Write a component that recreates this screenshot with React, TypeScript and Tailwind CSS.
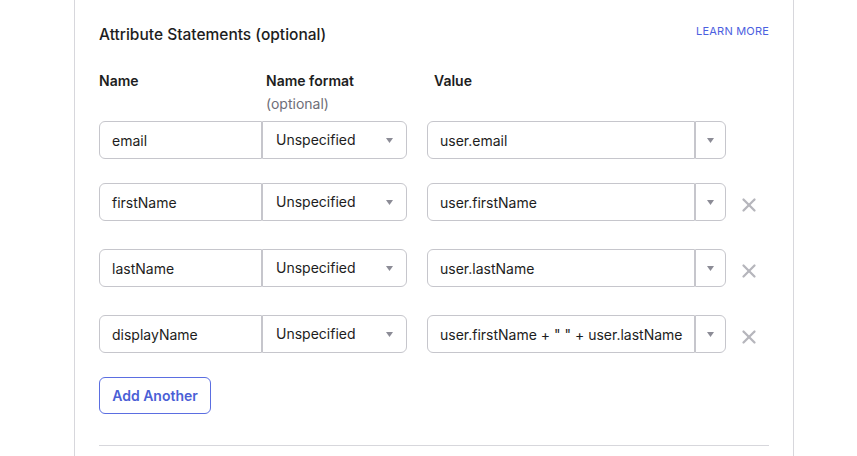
import { X } from 'lucide-react';

type Row = { name: string; value: string; removable: boolean };

const rows: Row[] = [
  { name: 'email', value: 'user.email', removable: false },
  { name: 'firstName', value: 'user.firstName', removable: true },
  { name: 'lastName', value: 'user.lastName', removable: true },
  { name: 'displayName', value: 'user.firstName + " " + user.lastName', removable: true },
];

const Caret = () => (
  <svg width="7" height="5" viewBox="0 0 7 5" className="fill-[#8c8c96]">
    <path d="M0 0 H7 L3.5 5 Z" />
  </svg>
);

const StatementRow = ({ row, first }: { row: Row; first: boolean }) => (
  <div className={`flex items-center h-[38px] ${first ? 'mb-6' : 'mb-7'}`}>
    <div className="flex h-full">
      <div className="w-[163px] h-full flex items-center pl-3 pt-px border border-[#c6c6cc] rounded-l-md text-sm text-[#1d1d21]">
        {row.name}
      </div>
      <div className="w-[145px] h-full flex items-center justify-between pl-[13px] pr-[13px] border border-[#c6c6cc] rounded-r-md text-sm text-[#1d1d21]">
        <span>Unspecified</span>
        <Caret />
      </div>
    </div>
    <div className="ml-5 flex h-full">
      <div className="w-[268px] h-full flex items-center pl-3 pt-px border border-[#c6c6cc] rounded-l-md text-sm text-[#1d1d21] whitespace-nowrap">
        {row.value}
      </div>
      <div className="w-[31px] h-full flex items-center justify-center border border-[#c6c6cc] rounded-r-md">
        <Caret />
      </div>
    </div>
    {row.removable && (
      <button className="ml-[12px] mt-[5px] w-[22px] h-[22px] flex items-center justify-center text-[#b6b6bc]" aria-label="Remove">
        <X className="w-[22px] h-[22px]" strokeWidth={2.5} />
      </button>
    )}
  </div>
);

export default function App() {
  return (
    <div className="w-[857px] h-[456px] overflow-hidden bg-white" style={{ fontFamily: 'Inter, "Noto Sans", sans-serif' }}>
      <div className="ml-[74px] w-[720px] h-full border-x border-[#d7d7dc] px-6 pt-6">
        <div className="flex items-start justify-between">
          <h2 className="mt-[1px] text-[15.5px] leading-5 font-medium text-[#1d1d21]">Attribute Statements (optional)</h2>
          <a className="text-[11px] leading-[14px] text-[#4b60e0] tracking-[0.2px]">LEARN MORE</a>
        </div>

        <div className="flex mt-[24px] text-sm leading-[23px] text-[#1d1d21]">
          <div className="w-[167px] font-semibold">Name</div>
          <div className="w-[168px]">
            <div className="font-semibold">Name format</div>
            <div className="text-[#6e6e78]">(optional)</div>
          </div>
          <div className="font-semibold">Value</div>
        </div>

        <div className="mt-[6px]">
          {rows.map((row, i) => (
            <StatementRow key={row.name} row={row} first={i === 0} />
          ))}
        </div>

        <button className="-mt-1 h-[37px] w-[112px] border border-[#5b6ee1] rounded-md text-sm font-semibold text-[#4b5fd6]">
          Add Another
        </button>

        <div className="mt-[31px] border-t border-[#d7d7dc]" />
      </div>
    </div>
  );
}
